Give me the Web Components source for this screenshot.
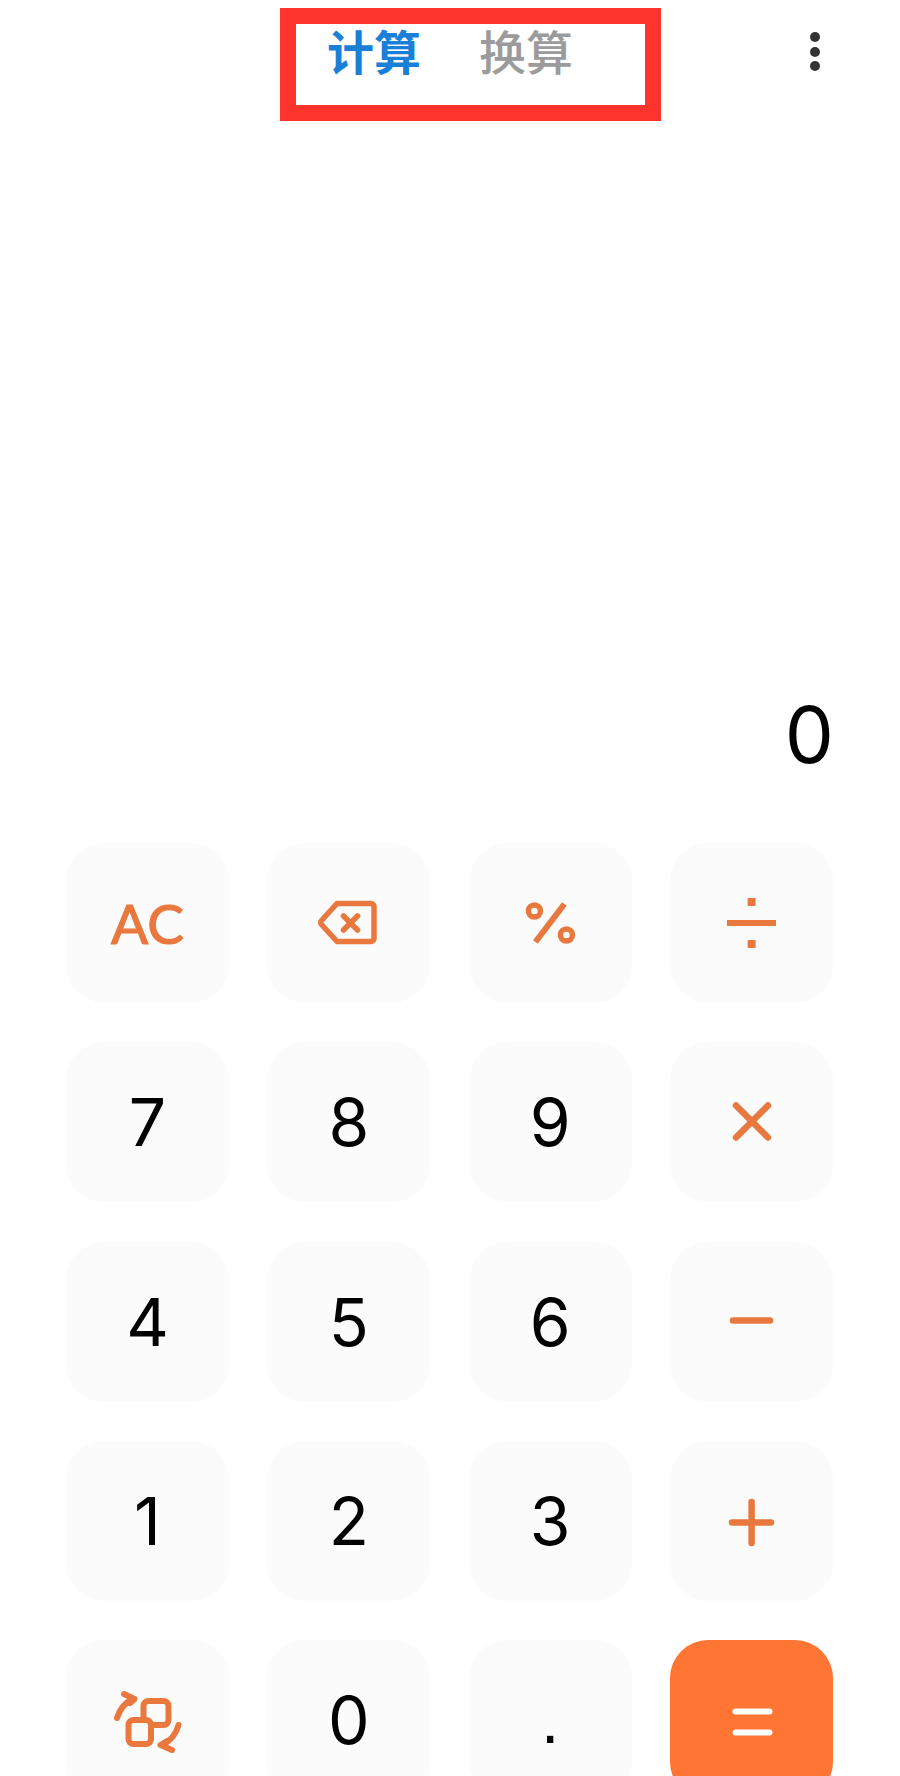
<!DOCTYPE html>
<html lang="zh-CN">
<head>
<meta charset="utf-8">
<title>计算器</title>
<style>
  html, body { margin: 0; background: #fff; }
</style>
</head>
<body>
<calc-app>
  <calc-header slot="header">
    <calc-tab active>计算</calc-tab>
    <calc-tab>换算</calc-tab>
  </calc-header>
  <calc-display slot="display">0</calc-display>
  <calc-keypad slot="keypad">
    <calc-key variant="label">AC</calc-key>
    <calc-key><calc-icon name="backspace"></calc-icon></calc-key>
    <calc-key><calc-icon name="percent"></calc-icon></calc-key>
    <calc-key><calc-icon name="divide"></calc-icon></calc-key>
    <calc-key>7</calc-key>
    <calc-key>8</calc-key>
    <calc-key>9</calc-key>
    <calc-key><calc-icon name="times"></calc-icon></calc-key>
    <calc-key>4</calc-key>
    <calc-key>5</calc-key>
    <calc-key>6</calc-key>
    <calc-key><calc-icon name="minus"></calc-icon></calc-key>
    <calc-key>1</calc-key>
    <calc-key>2</calc-key>
    <calc-key>3</calc-key>
    <calc-key><calc-icon name="plus"></calc-icon></calc-key>
    <calc-key><calc-icon name="swap"></calc-icon></calc-key>
    <calc-key>0</calc-key>
    <calc-key variant="dot">.</calc-key>
    <calc-key variant="primary"><calc-icon name="equals"></calc-icon></calc-key>
  </calc-keypad>
</calc-app>

<script>
class CalcApp extends HTMLElement {
  constructor() {
    super();
    this.attachShadow({mode: 'open'}).innerHTML = `
      <style>
        :host {
          display: flex;
          flex-direction: column;
          width: 900px;
          height: 1776px;
          overflow: hidden;
          background: #fff;
          font-family: Inter, "Liberation Sans", sans-serif;
        }
        slot[name=display] { display: flex; flex: 1; }
      </style>
      <slot name="header"></slot>
      <slot name="display"></slot>
      <slot name="keypad"></slot>
    `;
  }
}

class CalcHeader extends HTMLElement {
  constructor() {
    super();
    this.attachShadow({mode: 'open'}).innerHTML = `
      <style>
        :host {
          display: flex;
          align-items: flex-start;
          padding: 8px 0 0 280px;
          height: 113px;
        }
        .tabs {
          box-sizing: border-box;
          width: 381px;
          height: 113px;
          border: 16.5px solid #fd342b;
          display: flex;
          gap: 58px;
          padding: 0 0 0 31px;
        }
        .menu {
          margin-left: 149px;
          margin-top: 24px;
          display: flex;
          flex-direction: column;
          gap: 4.5px;
        }
        .menu i {
          width: 10px;
          height: 10px;
          border-radius: 50%;
          background: #333;
        }
      </style>
      <div class="tabs"><slot></slot></div>
      <div class="menu"><i></i><i></i><i></i></div>
    `;
  }
}

class CalcTab extends HTMLElement {
  constructor() {
    super();
    this.attachShadow({mode: 'open'}).innerHTML = `
      <style>
        :host {
          display: block;
          font: 500 47px/52px "Noto Sans CJK SC", sans-serif;
          color: #9b9b9b;
        }
        :host([active]) {
          font-weight: 700;
          color: #1a7fd6;
        }
      </style>
      <slot></slot>
    `;
  }
}

class CalcDisplay extends HTMLElement {
  constructor() {
    super();
    this.attachShadow({mode: 'open'}).innerHTML = `
      <style>
        :host {
          display: flex;
          flex: 1;
          align-items: flex-end;
          justify-content: flex-end;
          padding: 0 66px 63px 0;
          font-size: 78px;
          line-height: 90px;
          color: #000;
        }
      </style>
      <slot></slot>
    `;
  }
}

class CalcKeypad extends HTMLElement {
  constructor() {
    super();
    this.attachShadow({mode: 'open'}).innerHTML = `
      <style>
        :host {
          display: grid;
          grid-template-columns: repeat(4, 1fr);
          grid-auto-rows: 160px;
          column-gap: 38.33px;
          row-gap: 39.25px;
          padding: 0 67px 0 66px;
          height: 933px;
          flex: none;
        }
      </style>
      <slot></slot>
    `;
  }
}

class CalcKey extends HTMLElement {
  constructor() {
    super();
    this.attachShadow({mode: 'open'}).innerHTML = `
      <style>
        :host {
          display: flex;
          align-items: center;
          justify-content: center;
          border-radius: 38px;
          background: #fbfbfb;
          color: #000;
          font-size: 66px;
          line-height: 1;
        }
        :host([variant=label]) {
          color: #e9783f;
          font-family: Lato, "Liberation Sans", sans-serif;
          font-size: 55px;
          -webkit-text-stroke: 1.2px #e9783f;
          paint-order: stroke fill;
        }
        :host([variant=dot]) {
          font-family: "Liberation Sans", sans-serif;
        }
        :host([variant=primary]) {
          background: #ff7533;
        }
      </style>
      <slot></slot>
    `;
  }
}

const ICONS = {
  backspace: `<path d="M-12 -19.5H22a3 3 0 0 1 3 3V15.5a3 3 0 0 1-3 3H-12L-27.5 1.5a3 3 0 0 1 0-4Z"/>
    <path d="M-5.5 -7L8.5 7M8.5 -7L-5.5 7"/>`,
  percent: `<circle cx="-15.6" cy="-12" r="6"/><circle cx="16.4" cy="12" r="6"/>
    <path stroke-width="6" stroke-linecap="butt" d="M14.4 -19L-14.6 19"/>`,
  divide: `<path stroke-width="6" stroke-linecap="butt" d="M-24 0H25"/>
    <rect class="solid" x="-3.4" y="-25" width="8" height="8" rx="1"/>
    <rect class="solid" x="-3.4" y="17" width="8" height="8" rx="1"/>`,
  times: `<path stroke-width="6.5" d="M-15 -16.5L17 15.5M17 -16.5L-15 15.5"/>`,
  minus: `<path stroke-width="6.5" d="M-18 -1.5H19"/>`,
  plus: `<path stroke-width="6.5" d="M-19 1.5H20M0.6 -19V22"/>`,
  equals: `<path stroke="#fff" stroke-width="6" d="M-15.5 -8.5H18.5M-15.5 12.5H18.5"/>`,
  swap: `<g stroke-width="6">
      <rect x="-4.5" y="-19" width="25" height="24" rx="5"/>
      <rect x="-19.5" y="0" width="22.5" height="24" rx="5" fill="#fbfbfb"/>
      <path d="M-31 -2Q-27 -15 -15.5 -21M-24 -26L-13.5 -21L-18 -17"/>
      <path d="M30.5 5Q27 18 15 25M24 30L12.5 25L19 21"/>
    </g>`
};

class CalcIcon extends HTMLElement {
  constructor() {
    super();
    this.attachShadow({mode: 'open'});
  }
  connectedCallback() {
    this.shadowRoot.innerHTML = `
      <style>
        :host { display: block; width: 80px; height: 80px; }
        svg {
          display: block;
          fill: none;
          stroke: #e9783f;
          stroke-width: 5.5;
          stroke-linecap: round;
          stroke-linejoin: round;
        }
        .solid { fill: #e9783f; stroke: none; }
      </style>
      <svg width="80" height="80" viewBox="-40 -40 80 80">${ICONS[this.getAttribute('name')]}</svg>
    `;
  }
}

customElements.define('calc-app', CalcApp);
customElements.define('calc-header', CalcHeader);
customElements.define('calc-tab', CalcTab);
customElements.define('calc-display', CalcDisplay);
customElements.define('calc-keypad', CalcKeypad);
customElements.define('calc-key', CalcKey);
customElements.define('calc-icon', CalcIcon);
</script>
</body>
</html>
